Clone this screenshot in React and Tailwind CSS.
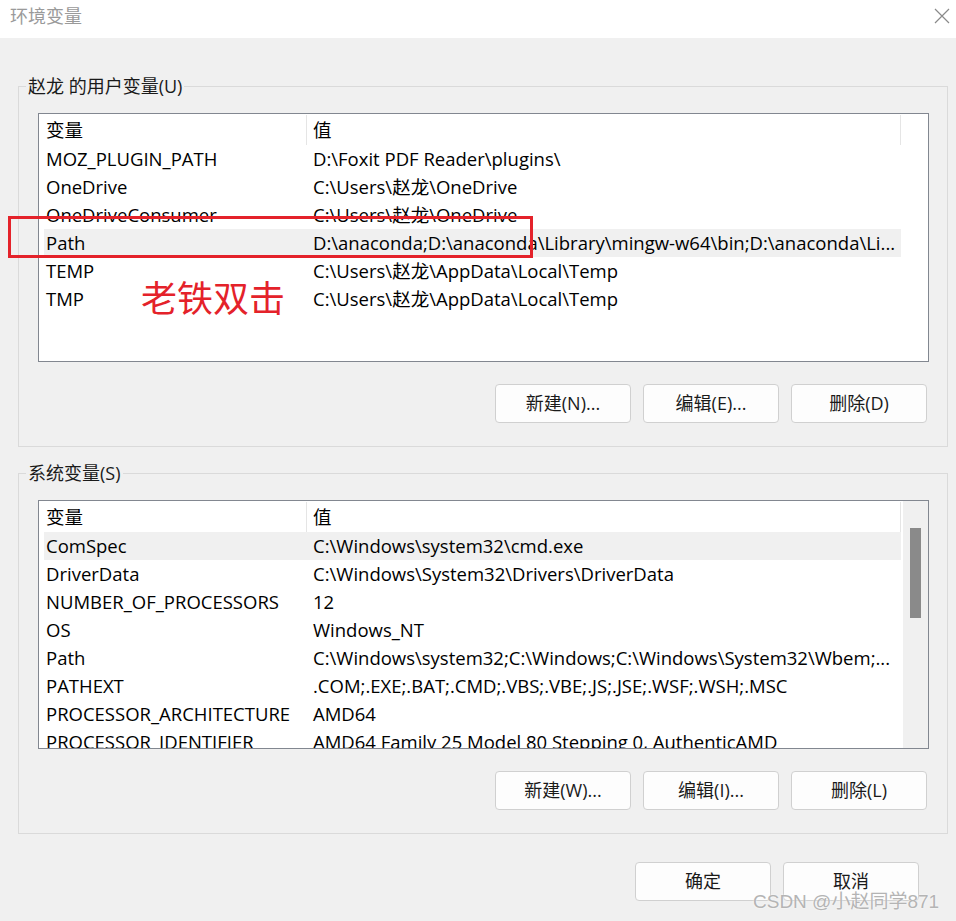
import React from "react";

const FONT = { fontFamily: '"Open Sans", "Noto Sans CJK SC", sans-serif' };

const userVars = [
  ["MOZ_PLUGIN_PATH", "D:\\Foxit PDF Reader\\plugins\\"],
  ["OneDrive", "C:\\Users\\赵龙\\OneDrive"],
  ["OneDriveConsumer", "C:\\Users\\赵龙\\OneDrive"],
  ["Path", "D:\\anaconda;D:\\anaconda\\Library\\mingw-w64\\bin;D:\\anaconda\\Li..."],
  ["TEMP", "C:\\Users\\赵龙\\AppData\\Local\\Temp"],
  ["TMP", "C:\\Users\\赵龙\\AppData\\Local\\Temp"],
];

const sysVars = [
  ["ComSpec", "C:\\Windows\\system32\\cmd.exe"],
  ["DriverData", "C:\\Windows\\System32\\Drivers\\DriverData"],
  ["NUMBER_OF_PROCESSORS", "12"],
  ["OS", "Windows_NT"],
  ["Path", "C:\\Windows\\system32;C:\\Windows;C:\\Windows\\System32\\Wbem;..."],
  ["PATHEXT", ".COM;.EXE;.BAT;.CMD;.VBS;.VBE;.JS;.JSE;.WSF;.WSH;.MSC"],
  ["PROCESSOR_ARCHITECTURE", "AMD64"],
  ["PROCESSOR_IDENTIFIER", "AMD64 Family 25 Model 80 Stepping 0, AuthenticAMD"],
];

function Rows({ rows, highlight }) {
  return (
    <div className="flex-1 overflow-hidden pl-[5px]">
      <div className="flex h-[31px] w-[857px] items-center">
        <div className="flex h-full w-[262px] items-center pl-[2px]">变量</div>
        <div className="h-[30px] w-px self-end bg-[#e5e5e5]" />
        <div className="flex h-full flex-1 items-center pl-[6px]">值</div>
        <div className="h-[30px] w-px self-end bg-[#e5e5e5]" />
      </div>
      {rows.map(([k, v], i) => (
        <div
          key={k + i}
          className={
            "flex h-[28px] w-[857px] items-center whitespace-nowrap " +
            (i === highlight ? "bg-[#f0f0f0]" : "")
          }
        >
          <div className="w-[263px] shrink-0 pl-[2px]">{k}</div>
          <div className="flex-1 overflow-hidden pl-[6px]">{v}</div>
        </div>
      ))}
    </div>
  );
}

function Btn({ children }) {
  return (
    <div className="flex h-[39px] w-[136px] items-center justify-center rounded-[4px] border border-[#d0d0d0] bg-[#fdfdfd] text-[18px] text-[#1a1a1a]">
      {children}
    </div>
  );
}

function Group({ title, rows, highlight, scroll, buttons }) {
  return (
    <div className="relative ml-[18px] mr-[8px] border border-[#dadada] pl-[19px] pr-[18px] pt-[26px] pb-[23px]">
      <div className="absolute left-[7px] top-[-13px] bg-[#f0f0f0] px-[2px] text-[18px] leading-[24px] text-[#1a1a1a]">
        {title}
      </div>
      <div className="flex h-[249px] border border-[#828790] bg-white text-[18.5px] text-black">
        <Rows rows={rows} highlight={highlight} />
        {scroll && (
          <div className="relative w-[25px] shrink-0 bg-[#f0f0f0]">
            <div className="absolute left-[7px] top-[27px] h-[90px] w-[11px] bg-[#8a8a8a]" />
          </div>
        )}
      </div>
      <div className="mt-[22px] flex justify-end gap-[12px] pr-[2px]">
        {buttons.map((b) => (
          <Btn key={b}>{b}</Btn>
        ))}
      </div>
    </div>
  );
}

export default function App() {
  return (
    <div className="relative h-[921px] w-[956px] overflow-hidden bg-[#f0f0f0]" style={FONT}>
      <div className="flex h-[38px] items-start justify-between bg-white pl-[10px] pr-[6px] pt-[3px]">
        <div className="text-[18px] leading-[26px] text-[#9a9a9a]">环境变量</div>
        <svg width="16" height="16" viewBox="0 0 16 16" className="mt-[5px]">
          <path d="M1 1L15 15M15 1L1 15" stroke="#8a8a8a" strokeWidth="1.2" />
        </svg>
      </div>

      <div className="pt-[48px]">
        <Group
          title="赵龙 的用户变量(U)"
          rows={userVars}
          highlight={3}
          scroll={false}
          buttons={["新建(N)...", "编辑(E)...", "删除(D)"]}
        />
        <div className="h-[26px]" />
        <Group
          title="系统变量(S)"
          rows={sysVars}
          highlight={0}
          scroll={true}
          buttons={["新建(W)...", "编辑(I)...", "删除(L)"]}
        />
        <div className="mt-[28px] flex justify-end gap-[12px] pr-[37px]">
          <Btn>确定</Btn>
          <Btn>取消</Btn>
        </div>
      </div>

      {/* annotation */}
      <div className="absolute left-[8px] top-[216px] h-[42px] w-[525px] border-[3px] border-[#e4222a]" />
      <div className="absolute left-[141px] top-[272px] text-[36px] leading-[48px] text-[#e4222a]" style={{ fontFamily: '"Noto Sans CJK SC", sans-serif' }}>
        老铁双击
      </div>
      <div
        className="absolute left-[753px] top-[889px] text-[19px] leading-[26px] text-[#b4b4b4]"
        style={{ fontFamily: '"Liberation Sans", "Noto Sans CJK SC", sans-serif', textShadow: "0 0 2px #ffffff" }}
      >
        CSDN @小赵同学871
      </div>
    </div>
  );
}
